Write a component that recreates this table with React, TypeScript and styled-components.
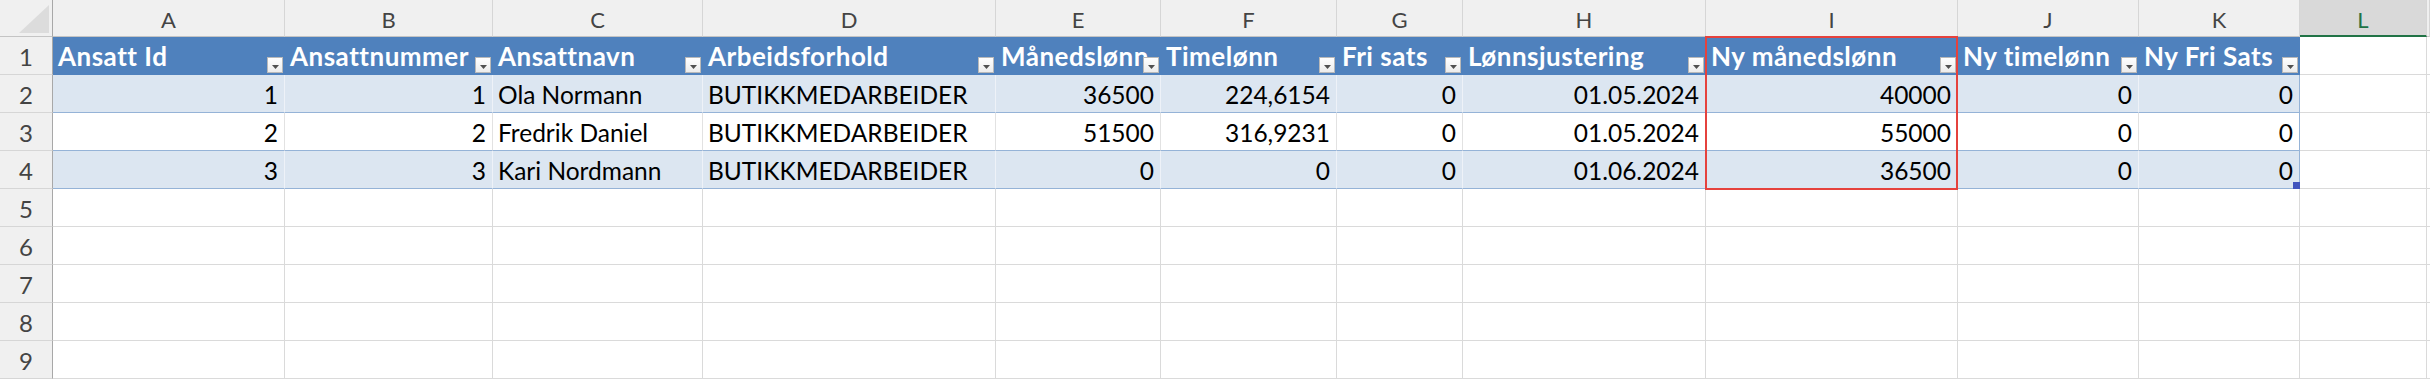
import styled, { createGlobalStyle } from "styled-components";

const COLS = [53, 232, 208, 210, 293, 165, 176, 126, 243, 252, 181, 161, 127];
const TEMPLATE = COLS.map((w) => `${w}px`).join(" ") + " 1fr";
const LETTERS = ["A", "B", "C", "D", "E", "F", "G", "H", "I", "J", "K", "L", ""];
const ACTIVE_COL = "L";
const MARKED_COL = 9; // "Ny månedslønn"

const HEADERS = [
  "Ansatt Id",
  "Ansattnummer",
  "Ansattnavn",
  "Arbeidsforhold",
  "Månedslønn",
  "Timelønn",
  "Fri sats",
  "Lønnsjustering",
  "Ny månedslønn",
  "Ny timelønn",
  "Ny Fri Sats",
];

const TEXT_COLS = [2, 3];

const ROWS: (string | number)[][] = [
  [1, 1, "Ola Normann", "BUTIKKMEDARBEIDER", 36500, "224,6154", 0, "01.05.2024", 40000, 0, 0],
  [2, 2, "Fredrik Daniel", "BUTIKKMEDARBEIDER", 51500, "316,9231", 0, "01.05.2024", 55000, 0, 0],
  [3, 3, "Kari Nordmann", "BUTIKKMEDARBEIDER", 0, 0, 0, "01.06.2024", 36500, 0, 0],
];

const GlobalStyle = createGlobalStyle`
  html, body {
    margin: 0;
    padding: 0;
    background: #ffffff;
    overflow: hidden;
  }
  body {
    font-family: Lato, "Open Sans", "Liberation Sans", sans-serif;
    color: #000;
  }
`;

const Sheet = styled.div`
  position: relative;
  display: flex;
  flex-direction: column;
  height: 100vh;
  overflow: hidden;
`;

const Row = styled.div<{ $h: number }>`
  display: grid;
  grid-template-columns: ${TEMPLATE};
  height: ${(p) => p.$h}px;
  flex: none;
`;

const Corner = styled.div`
  background: #f0f0f0;
  border-right: 1px solid #a8a8a8;
  border-bottom: 1px solid #c4c4c4;
  box-sizing: border-box;
  display: flex;
  align-items: flex-end;
  justify-content: flex-end;
  padding: 0 3px 3px 0;
  svg {
    display: block;
  }
`;

const ColHead = styled.div<{ $active?: boolean }>`
  box-sizing: border-box;
  background: ${(p) => (p.$active ? "#d9d9d9" : "#f0f0f0")};
  border-right: 1px solid #d6d6d6;
  border-bottom: ${(p) => (p.$active ? "2px solid #217346" : "1px solid #c4c4c4")};
  color: ${(p) => (p.$active ? "#217346" : "#444444")};
  font-size: 22px;
  line-height: 22px;
  display: flex;
  align-items: flex-end;
  justify-content: center;
  padding-bottom: ${(p) => (p.$active ? 4 : 5)}px;
  overflow: hidden;
`;

const RowHead = styled.div`
  box-sizing: border-box;
  background: #f0f0f0;
  border-right: 1px solid #a8a8a8;
  border-bottom: 1px solid #d6d6d6;
  color: #444444;
  font-size: 24px;
  line-height: 24px;
  display: flex;
  align-items: flex-end;
  justify-content: center;
  padding-bottom: 5px;
`;

type Kind = "head" | "band" | "plain" | "grid";

const fills: Record<Kind, string> = {
  head: "#4f81bd",
  band: "#dce6f1",
  plain: "#ffffff",
  grid: "#ffffff",
};

const rightLines: Record<Kind, string> = {
  head: "#4f81bd",
  band: "#eef2f8",
  plain: "#e2e2e2",
  grid: "#dadada",
};

const bottomLines: Record<Kind, string> = {
  head: "#4f81bd",
  band: "#95b3d7",
  plain: "#95b3d7",
  grid: "#dadada",
};

const Cell = styled.div<{ $kind: Kind; $right?: boolean; $edge?: boolean }>`
  position: relative;
  box-sizing: border-box;
  background: ${(p) => fills[p.$kind]};
  border-right: 1px solid
    ${(p) => (p.$edge && p.$kind !== "head" ? "#95b3d7" : rightLines[p.$kind])};
  border-bottom: 1px solid ${(p) => bottomLines[p.$kind]};
  color: ${(p) => (p.$kind === "head" ? "#ffffff" : "#000000")};
  font-weight: ${(p) => (p.$kind === "head" ? 700 : 400)};
  font-size: ${(p) => (p.$kind === "head" ? 26 : 24.5)}px;
  letter-spacing: ${(p) => (p.$kind === "head" ? 0.5 : 0)}px;
  line-height: 24px;
  white-space: nowrap;
  display: flex;
  align-items: flex-end;
  justify-content: ${(p) => (p.$right ? "flex-end" : "flex-start")};
  padding: 0 6px ${(p) => (p.$kind === "head" ? 6 : 5)}px 5px;
`;

const FilterButton = styled.span`
  position: absolute;
  right: 1px;
  bottom: 1px;
  width: 16px;
  height: 16px;
  box-sizing: border-box;
  background: linear-gradient(#ffffff, #ececec);
  border: 1px solid #b9b9b9;
  display: flex;
  align-items: center;
  justify-content: center;
  padding-top: 3px;
  svg {
    display: block;
  }
`;

const ResizeHandle = styled.span`
  position: absolute;
  right: -1px;
  bottom: -1px;
  width: 7px;
  height: 7px;
  background: #4154be;
`;

const Marker = styled.div<{ $left: number; $width: number }>`
  position: absolute;
  top: 36px;
  left: ${(p) => p.$left}px;
  width: ${(p) => p.$width}px;
  height: 154px;
  box-sizing: border-box;
  border: 2px solid #e5423d;
  pointer-events: none;
`;

function FilterArrow() {
  return (
    <FilterButton>
      <svg width="7" height="4" viewBox="0 0 7 4">
        <path d="M0 0 H7 L3.5 4 Z" fill="#505050" />
      </svg>
    </FilterButton>
  );
}

export default function App() {
  const markLeft = COLS.slice(0, MARKED_COL).reduce((a, b) => a + b, 0) - 1;
  const emptyRows = [5, 6, 7, 8, 9];
  const tableCols = HEADERS.length;

  return (
    <Sheet>
      <GlobalStyle />
      <Row $h={37}>
        <Corner>
          <svg width="30" height="28" viewBox="0 0 30 28">
            <path d="M0 28 L30 0 V28 Z" fill="#dcdcdc" />
          </svg>
        </Corner>
        {LETTERS.map((l, i) => (
          <ColHead key={i} $active={l === ACTIVE_COL}>
            {l}
          </ColHead>
        ))}
      </Row>

      <Row $h={38}>
        <RowHead>1</RowHead>
        {HEADERS.map((h) => (
          <Cell key={h} $kind="head">
            {h}
            <FilterArrow />
          </Cell>
        ))}
        <Cell $kind="grid" />
        <Cell $kind="grid" />
      </Row>

      {ROWS.map((r, ri) => (
        <Row $h={38} key={ri}>
          <RowHead>{ri + 2}</RowHead>
          {r.map((v, ci) => (
            <Cell
              key={ci}
              $kind={ri % 2 === 0 ? "band" : "plain"}
              $right={!TEXT_COLS.includes(ci)}
              $edge={ci === tableCols - 1}
            >
              {v}
              {ri === ROWS.length - 1 && ci === tableCols - 1 && <ResizeHandle />}
            </Cell>
          ))}
          <Cell $kind="grid" />
          <Cell $kind="grid" />
        </Row>
      ))}

      {emptyRows.map((n) => (
        <Row $h={38} key={n}>
          <RowHead>{n}</RowHead>
          {LETTERS.map((_, i) => (
            <Cell key={i} $kind="grid" />
          ))}
        </Row>
      ))}

      <Marker $left={markLeft} $width={COLS[MARKED_COL] + 1} />
    </Sheet>
  );
}
